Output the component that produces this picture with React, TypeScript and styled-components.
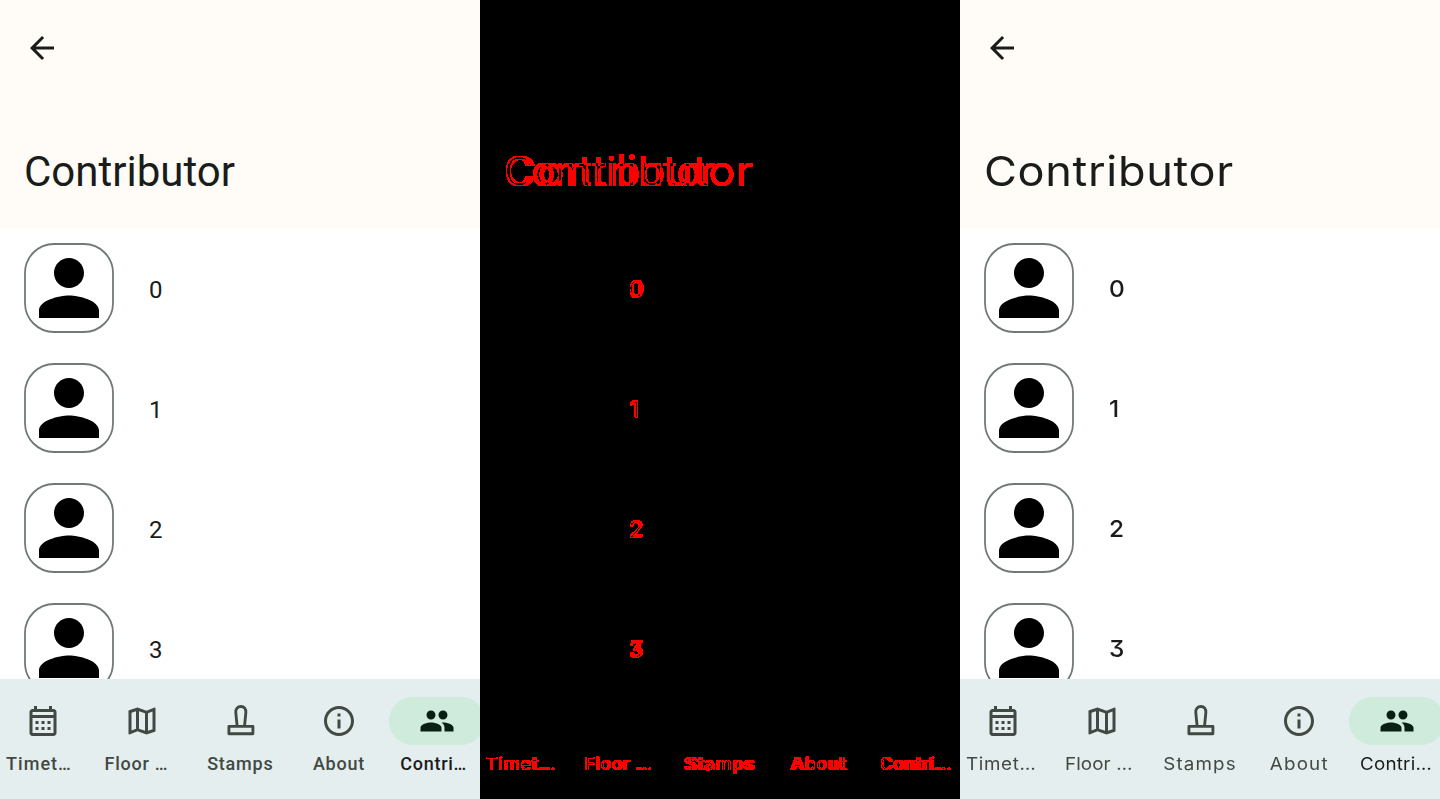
import React from "react";
import styled, { createGlobalStyle } from "styled-components";

type Face = "roboto" | "wide";

const GlobalStyle = createGlobalStyle`
  *, *::before, *::after { box-sizing: border-box; }
  body { margin: 0; background: #fff; overflow: hidden; }
`;

const Comparison = styled.main`
  display: flex;
  width: 1440px;
  height: 799px;
`;

const Screen = styled.section<{ $face: Face }>`
  display: flex;
  flex-direction: column;
  flex: none;
  width: 480px;
  height: 799px;
  overflow: hidden;
  background: #fff;
  color: #191c1a;
  font-family: ${(p) => (p.$face === "wide" ? '"Inter", sans-serif' : '"Roboto", sans-serif')};
  font-feature-settings: ${(p) => (p.$face === "wide" ? '"cv09"' : "normal")};
`;

const Header = styled.header`
  display: flex;
  flex-direction: column;
  align-items: flex-start;
  justify-content: space-between;
  flex: none;
  height: 228px;
  padding: 30px 24px 27px;
  background: #fffcf7;
`;

const BackIcon = styled.svg`
  display: block;
  width: 36px;
  height: 36px;
`;

const Title = styled.h1<{ $face: Face }>`
  margin: ${(p) => (p.$face === "wide" ? "0" : "0 0 -1px")};
  font-weight: 400;
  font-size: ${(p) => (p.$face === "wide" ? "41px" : "42px")};
  line-height: 60px;
  letter-spacing: ${(p) => (p.$face === "wide" ? "0.6px" : "0")};
  transform: ${(p) => (p.$face === "wide" ? "scaleX(1.1)" : "none")};
  transform-origin: left;
`;

const List = styled.ul`
  flex: 1;
  min-height: 0;
  margin: 0;
  padding: 0;
  overflow: hidden;
  list-style: none;
`;

const Row = styled.li`
  display: flex;
  align-items: center;
  gap: 35px;
  height: 120px;
  padding: 0 24px;
`;

const Avatar = styled.svg`
  flex: none;
  width: 90px;
  height: 90px;
`;

const Name = styled.span<{ $face: Face }>`
  padding-top: ${(p) => (p.$face === "wide" ? "1px" : "3px")};
  font-size: ${(p) => (p.$face === "wide" ? "23.5px" : "24px")};
  font-weight: ${(p) => (p.$face === "wide" ? 450 : 400)};
  line-height: 36px;
  transform: ${(p) => (p.$face === "wide" ? "scaleX(1.04)" : "none")};
  transform-origin: left;
`;

const NavBar = styled.nav`
  display: flex;
  flex: none;
  gap: 12px;
  height: 120px;
  background: #e5eeef;
`;

const NavItem = styled.div<{ $active?: boolean }>`
  display: flex;
  flex-direction: column;
  align-items: center;
  flex: 0 0 86.55px;
  min-width: 0;
  padding-top: 18px;
  color: ${(p) => (p.$active ? "#191c1a" : "#414942")};
`;

const Indicator = styled.div<{ $active?: boolean }>`
  display: flex;
  align-items: center;
  justify-content: center;
  flex: none;
  width: 96px;
  height: 48px;
  border-radius: 24px;
  background: ${(p) => (p.$active ? "#ceebdc" : "transparent")};
  color: ${(p) => (p.$active ? "#082014" : "#414942")};
`;

const NavIcon = styled.svg`
  width: 36px;
  height: 36px;
`;

const Label = styled.span<{ $face: Face; $cut?: boolean; $track: number }>`
  align-self: ${(p) => (p.$cut ? "flex-start" : "center")};
  margin-top: 7px;
  margin-left: ${(p) => (p.$cut ? "6px" : "0")};
  font-size: ${(p) => (p.$face === "wide" ? "17.4px" : "18px")};
  font-weight: ${(p) => (p.$face === "wide" ? 400 : 500)};
  line-height: 24px;
  letter-spacing: ${(p) => p.$track}px;
  white-space: nowrap;
  transform: ${(p) => (p.$face === "wide" ? "scaleX(1.08)" : "none")};
  transform-origin: ${(p) => (p.$cut ? "left" : "center")};
`;

const DiffPanel = styled.section`
  position: relative;
  flex: none;
  width: 480px;
  height: 799px;
  overflow: hidden;
  isolation: isolate;
  background: #000;
  filter: url(#changed-pixels);
`;

const DiffLayer = styled.div`
  position: absolute;
  inset: 0;
  mix-blend-mode: difference;
`;

const FilterDefs = styled.svg`
  position: absolute;
  width: 0;
  height: 0;
`;

const icons = {
  calendar: (
    <>
      <path d="M19 4h-1V2h-2v2H8V2H6v2H5c-1.11 0-1.99.9-1.99 2L3 20c0 1.1.89 2 2 2h14c1.1 0 2-.9 2-2V6c0-1.1-.9-2-2-2zm0 16H5V10h14v10zm0-12H5V6h14v2z" />
      <path d="M7 12h2v2H7zM11 12h2v2h-2zM15 12h2v2h-2zM7 16h2v2H7zM11 16h2v2h-2zM15 16h2v2h-2z" />
    </>
  ),
  map: (
    <path d="M20.5 3l-.16.03L15 5.1 9 3 3.36 4.9c-.21.07-.36.25-.36.48V20.5c0 .28.22.5.5.5l.16-.03L9 18.9l6 2.1 5.64-1.9c.21-.07.36-.25.36-.48V3.5c0-.28-.22-.5-.5-.5zM10 5.47l4 1.4v11.66l-4-1.4V5.47zm-5 .99l3-1.01v11.7l-3 1.16V6.46zm14 11.08l-3 1.01V6.86l3-1.16v11.84z" />
  ),
  stamp: (
    <path
      fill="none"
      stroke="currentColor"
      strokeWidth="1.9"
      strokeLinejoin="round"
      d="M4.6 15.6h16v4.9h-16zM10.1 15.6 9.2 6.4C9 4 10.4 2.3 12.6 2.3s3.5 1.7 3.3 4.1l-.9 9.2"
    />
  ),
  info: (
    <path d="M11 7h2v2h-2zm0 4h2v6h-2zm1-9C6.48 2 2 6.48 2 12s4.48 10 10 10 10-4.48 10-10S17.52 2 12 2zm0 18c-4.41 0-8-3.59-8-8s3.59-8 8-8 8 3.59 8 8-3.59 8-8 8z" />
  ),
  people: (
    <path d="M16 11c1.66 0 2.99-1.34 2.99-3S17.66 5 16 5c-1.66 0-3 1.34-3 3s1.34 3 3 3zm-8 0c1.66 0 2.99-1.34 2.99-3S9.66 5 8 5C6.34 5 5 6.34 5 8s1.34 3 3 3zm0 2c-2.33 0-7 1.17-7 3.5V19h14v-2.5c0-2.33-4.67-3.5-7-3.5zm8 0c-.29 0-.62.02-.97.05 1.16.84 1.97 1.97 1.97 3.45V19h6v-2.5c0-2.33-4.67-3.5-7-3.5z" />
  ),
};

const tabs: {
  icon: keyof typeof icons;
  label: string;
  cut?: boolean;
  active?: boolean;
  track: Record<Face, number>;
}[] = [
  { icon: "calendar", label: "Timet…", cut: true, track: { roboto: 1.05, wide: 0.6 } },
  { icon: "map", label: "Floor …", cut: true, track: { roboto: 0.75, wide: 0.1 } },
  { icon: "stamp", label: "Stamps", track: { roboto: 0.8, wide: 1.05 } },
  { icon: "info", label: "About", track: { roboto: 0.75, wide: 1.1 } },
  { icon: "people", label: "Contri…", cut: true, active: true, track: { roboto: 0.75, wide: 0.2 } },
];

function ContributorScreen({ face }: { face: Face }) {
  return (
    <Screen $face={face}>
      <Header>
        <BackIcon viewBox="0 0 24 24" fill="currentColor">
          <path d="M20 11H7.83l5.59-5.59L12 4l-8 8 8 8 1.41-1.41L7.83 13H20v-2z" />
        </BackIcon>
        <Title $face={face}>Contributor</Title>
      </Header>
      <List>
        {[0, 1, 2, 3].map((n) => (
          <Row key={n}>
            <Avatar viewBox="0 0 90 90">
              <rect x="1" y="1" width="88" height="88" rx="29" fill="none" stroke="#707973" strokeWidth="1.8" />
              <path
                transform="scale(3.75)"
                d="M12 12c2.21 0 4-1.79 4-4s-1.79-4-4-4-4 1.79-4 4 1.79 4 4 4zm0 2c-2.67 0-8 1.34-8 4v2h16v-2c0-2.66-5.33-4-8-4z"
              />
            </Avatar>
            <Name $face={face}>{n}</Name>
          </Row>
        ))}
      </List>
      <NavBar>
        {tabs.map((t) => (
          <NavItem key={t.label} $active={t.active}>
            <Indicator $active={t.active}>
              <NavIcon viewBox="0 0 24 24" fill="currentColor">
                {icons[t.icon]}
              </NavIcon>
            </Indicator>
            <Label $face={face} $cut={t.cut} $track={t.track[face]}>
              {t.label}
            </Label>
          </NavItem>
        ))}
      </NavBar>
    </Screen>
  );
}

export default function App() {
  return (
    <>
      <GlobalStyle />
      <FilterDefs aria-hidden="true">
        <filter id="changed-pixels" x="0" y="0" width="100%" height="100%" colorInterpolationFilters="sRGB">
          <feColorMatrix values="80 80 80 0 -1.5  0 0 0 0 0  0 0 0 0 0  0 0 0 0 1" />
        </filter>
      </FilterDefs>
      <Comparison>
        <ContributorScreen face="roboto" />
        <DiffPanel>
          <DiffLayer>
            <ContributorScreen face="roboto" />
          </DiffLayer>
          <DiffLayer>
            <ContributorScreen face="wide" />
          </DiffLayer>
        </DiffPanel>
        <ContributorScreen face="wide" />
      </Comparison>
    </>
  );
}
